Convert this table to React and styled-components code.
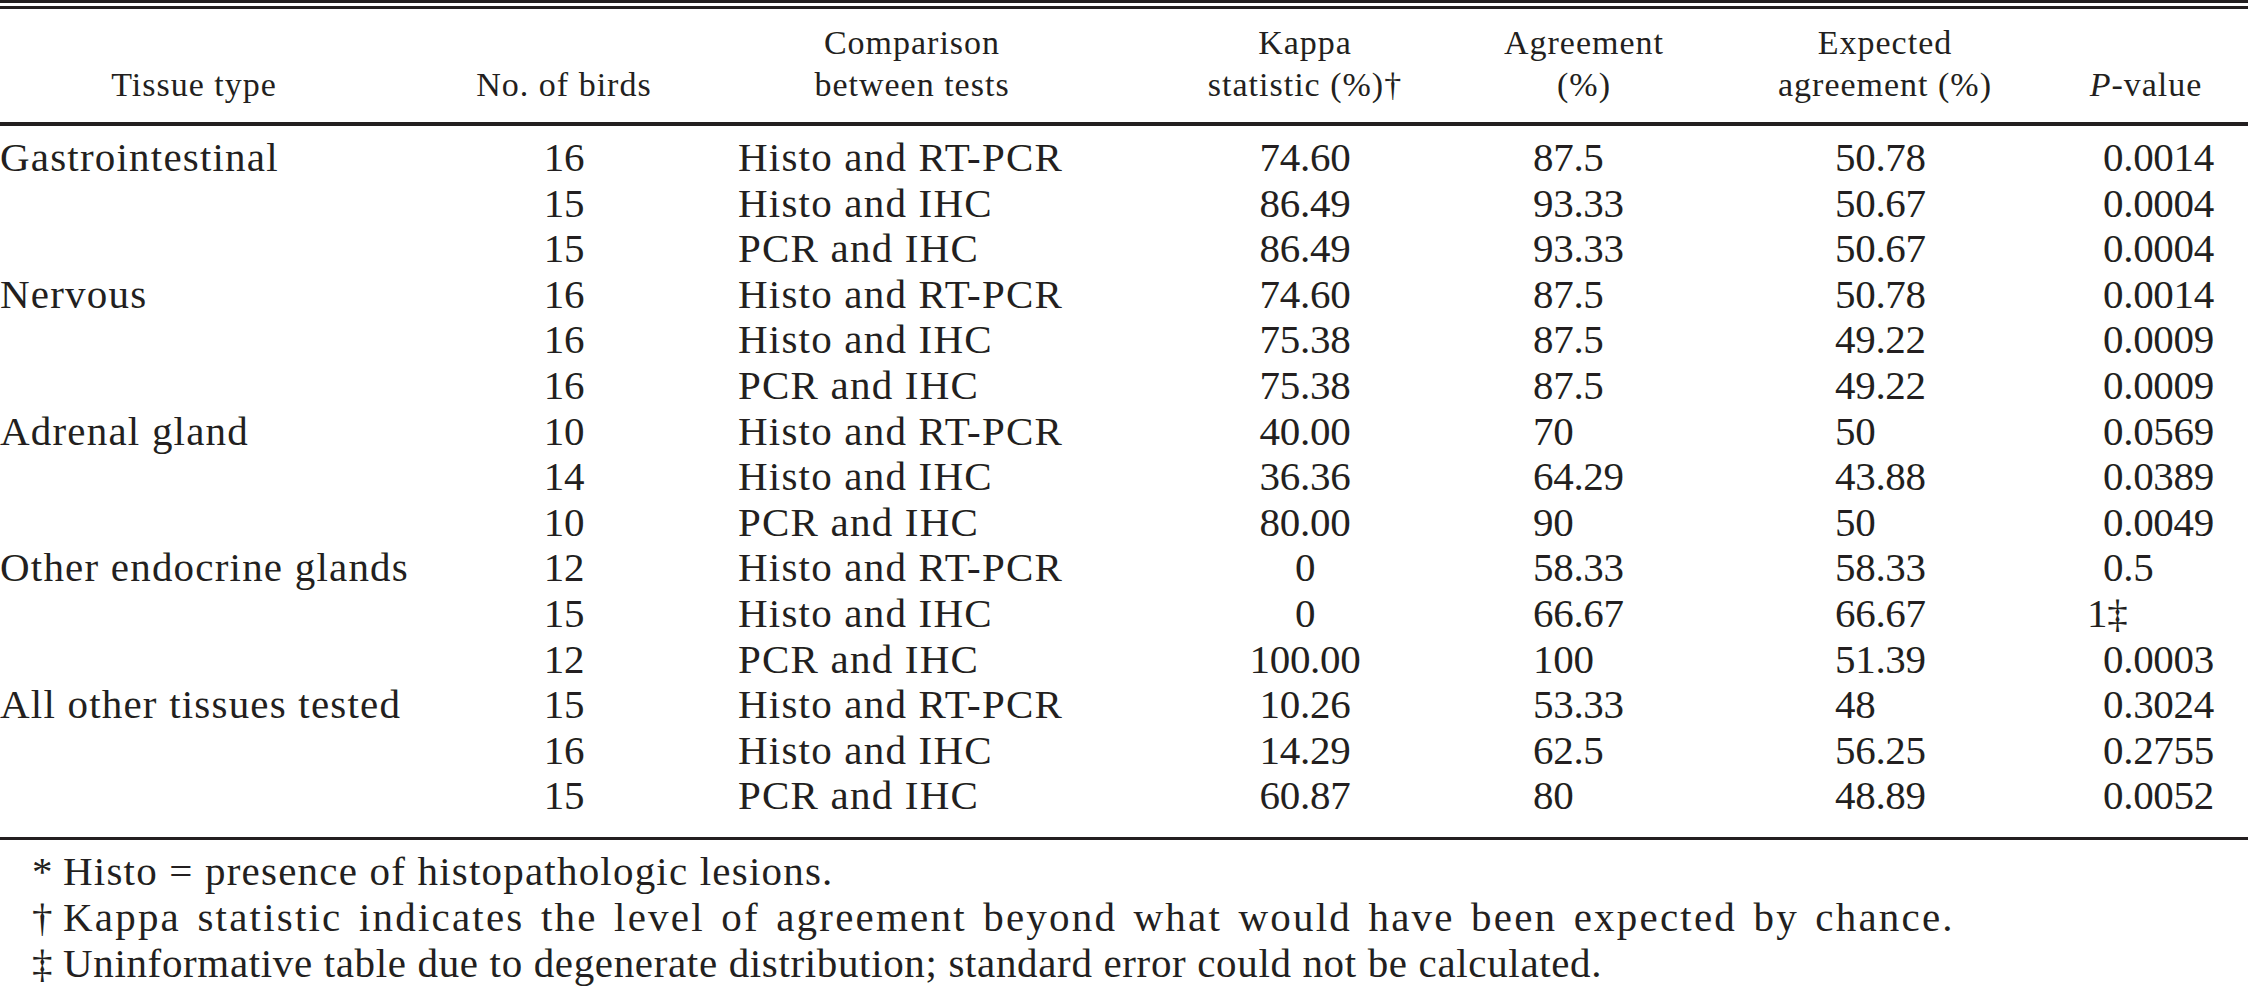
import React from 'react';
import styled, { createGlobalStyle, css } from 'styled-components';

const GlobalStyle = createGlobalStyle`
  html, body {
    margin: 0;
    padding: 0;
    background: #ffffff;
  }
  body {
    font-family: "Liberation Serif", "Times New Roman", serif;
    color: #231f20;
  }
`;

const ink = '#231f20';

const gridCols = css`
  display: grid;
  grid-template-columns: 472px 184px 512px 274px 284px 318px 204px;
`;

const columns = [
  { align: 'left', pad: 0, headPad: 84 },
  { align: 'center', pad: 0, numeric: true },
  { align: 'left', pad: 82 },
  { align: 'center', pad: 0, numeric: true },
  { align: 'left', pad: 91, numeric: true },
  { align: 'left', pad: 109, numeric: true },
  { align: 'left', pad: 59, numeric: true },
];

const headers = [
  ['Tissue type'],
  ['No. of birds'],
  ['Comparison', 'between tests'],
  ['Kappa', 'statistic (%)†'],
  ['Agreement', '(%)'],
  ['Expected', 'agreement (%)'],
  [<><i>P</i>-value</>],
];

const rows = [
  ['Gastrointestinal', '16', 'Histo and RT-PCR', '74.60', '87.5', '50.78', '0.0014'],
  ['', '15', 'Histo and IHC', '86.49', '93.33', '50.67', '0.0004'],
  ['', '15', 'PCR and IHC', '86.49', '93.33', '50.67', '0.0004'],
  ['Nervous', '16', 'Histo and RT-PCR', '74.60', '87.5', '50.78', '0.0014'],
  ['', '16', 'Histo and IHC', '75.38', '87.5', '49.22', '0.0009'],
  ['', '16', 'PCR and IHC', '75.38', '87.5', '49.22', '0.0009'],
  ['Adrenal gland', '10', 'Histo and RT-PCR', '40.00', '70', '50', '0.0569'],
  ['', '14', 'Histo and IHC', '36.36', '64.29', '43.88', '0.0389'],
  ['', '10', 'PCR and IHC', '80.00', '90', '50', '0.0049'],
  ['Other endocrine glands', '12', 'Histo and RT-PCR', '0', '58.33', '58.33', '0.5'],
  ['', '15', 'Histo and IHC', '0', '66.67', '66.67', '1‡'],
  ['', '12', 'PCR and IHC', '100.00', '100', '51.39', '0.0003'],
  ['All other tissues tested', '15', 'Histo and RT-PCR', '10.26', '53.33', '48', '0.3024'],
  ['', '16', 'Histo and IHC', '14.29', '62.5', '56.25', '0.2755'],
  ['', '15', 'PCR and IHC', '60.87', '80', '48.89', '0.0052'],
];

// each footnote was set with its own tracking in the source
const notes = [
  { mark: '*', text: 'Histo = presence of histopathologic lesions.', ls: 1.2, ws: 0 },
  {
    mark: '†',
    text: 'Kappa statistic indicates the level of agreement beyond what would have been expected by chance.',
    ls: 2.2,
    ws: 4,
  },
  {
    mark: '‡',
    text: 'Uninformative table due to degenerate distribution; standard error could not be calculated.',
    ls: 0.65,
    ws: 0,
  },
];

const Page = styled.div`
  width: 2248px;
  background: #ffffff;
`;

const DoubleRule = styled.div`
  height: 3px;
  border-top: 3px solid ${ink};
  border-bottom: 3px solid ${ink};
`;

const Rule = styled.div`
  height: ${props => props.$weight}px;
  background: ${ink};
`;

const HeadRow = styled.div`
  ${gridCols};
  box-sizing: border-box;
  height: 113px;
  padding-bottom: 15.5px;
  align-items: end;
  font-size: 34px;
  line-height: 42.5px;
  letter-spacing: 1px;
`;

const HeadCell = styled.div`
  text-align: center;
  white-space: nowrap;
  padding-right: ${props => props.$pr || 0}px;

  i {
    font-style: italic;
  }
`;

const Body = styled.div`
  padding: 9px 0 18px;
`;

const Row = styled.div`
  ${gridCols};
  height: 45.6px;
  font-size: 41px;
  line-height: 45.6px;
  letter-spacing: 1.2px;
`;

const Cell = styled.div`
  white-space: nowrap;
  text-align: ${props => props.$align};
  padding-left: ${props => props.$pad}px;
  letter-spacing: ${props => (props.$numeric ? '-0.3px' : 'inherit')};
`;

const Notes = styled.div`
  padding-top: 8.2px;
  font-size: 41px;
  line-height: 46px;
`;

const Note = styled.div`
  display: flex;
  padding-left: 32px;
  white-space: nowrap;
  letter-spacing: ${props => props.$ls}px;
  word-spacing: ${props => props.$ws}px;
`;

const Mark = styled.span`
  display: inline-block;
  width: 31px;
  letter-spacing: 0;
`;

// the "1‡" entry hangs left of the other P-values
const cellPad = (col, value) => (value === '1‡' ? col.pad - 16 : col.pad);

export default function App() {
  return (
    <Page>
      <GlobalStyle />
      <DoubleRule />
      <HeadRow>
        {headers.map((lines, i) => (
          <HeadCell key={i} $pr={columns[i].headPad}>
            {lines.map((line, j) => (
              <div key={j}>{line}</div>
            ))}
          </HeadCell>
        ))}
      </HeadRow>
      <Rule $weight={4} />
      <Body>
        {rows.map((row, r) => (
          <Row key={r}>
            {row.map((value, c) => (
              <Cell
                key={c}
                $align={columns[c].align}
                $pad={cellPad(columns[c], value)}
                $numeric={columns[c].numeric}
              >
                {value}
              </Cell>
            ))}
          </Row>
        ))}
      </Body>
      <Rule $weight={3} />
      <Notes>
        {notes.map(note => (
          <Note key={note.mark} $ls={note.ls} $ws={note.ws}>
            <Mark>{note.mark}</Mark>
            <span>{note.text}</span>
          </Note>
        ))}
      </Notes>
    </Page>
  );
}
